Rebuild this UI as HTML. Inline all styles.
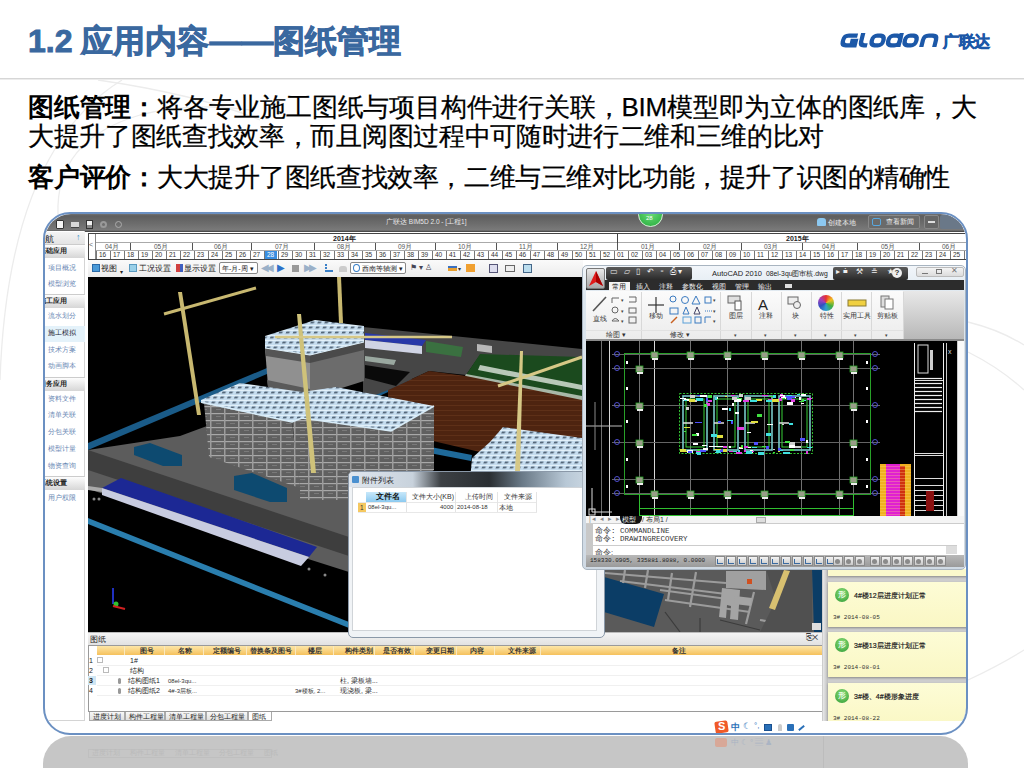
<!DOCTYPE html>
<html><head><meta charset="utf-8">
<style>
*{margin:0;padding:0;box-sizing:border-box}
html,body{width:1024px;height:768px;overflow:hidden;background:#fff;font-family:"Liberation Sans",sans-serif}
.a{position:absolute}
.t{position:absolute;white-space:nowrap}
b{-webkit-text-stroke:0}
#clip{position:absolute;left:0;top:0;width:1024px;height:768px;clip-path:inset(214px 58px 35px 45px round 26px)}
</style></head><body>
<!-- background swooshes -->
<svg class="a" style="left:0;top:0" width="1024" height="768">
<g stroke="#ececec" stroke-width="1.3" fill="none">
<path d="M0,380 Q8,150 122,80"/>
<path d="M58,215 Q55,140 140,115 Q190,102 250,110"/>
<path d="M98,80 Q200,95 260,120"/>
<path d="M968,322 Q1000,330 1024,345"/>
<path d="M968,352 Q1000,368 1024,390"/>
<path d="M968,680 Q1000,665 1024,650"/>
</g>
</svg>
<!-- header -->
<div class="t" style="left:28px;top:20px;font-size:32px;font-weight:bold;color:#3a689f;letter-spacing:0px;-webkit-text-stroke:0.9px #3a689f">1.2 应用内容——图纸管理</div>
<svg class="a" style="left:840px;top:33px;overflow:visible" width="160" height="18">
 <g transform="translate(3,1) skewX(-14)" stroke="#1c58a8" stroke-width="4.3" fill="none">
  <path d="M15,1.7 H6 Q1.7,1.7 1.7,6 V7.5 Q1.7,11.3 6,11.3 H14.5 V7 H9"/>
  <path d="M20,-1 V7.5 Q20,11.3 24,11.3 H27"/>
  <rect x="30.5" y="1.7" width="11.5" height="9.6" rx="4"/>
  <rect x="47" y="1.7" width="11.5" height="9.6" rx="4"/>
  <path d="M58.5,-1 V13"/>
  <rect x="63.5" y="1.7" width="11.5" height="9.6" rx="4"/>
  <path d="M81.5,13 V6 Q81.5,1.7 86,1.7 H90 Q94.5,1.7 94.5,6 V13"/>
 </g>
</svg>
<div class="t" style="left:943px;top:32px;font-size:16px;font-weight:bold;color:#1c58a8;letter-spacing:-0.5px;-webkit-text-stroke:0.6px #1c58a8">广联达</div>
<div class="a" style="left:0;top:78px;width:1024px;height:1px;background:#d6d6d6"></div><div class="a" style="left:0;top:79px;width:1024px;height:1px;background:#ececec"></div>
<!-- body text -->
<div class="t" style="left:28px;top:93px;font-size:26px;line-height:29px;color:#000;letter-spacing:-0.2px;-webkit-text-stroke:0.25px #000"><b>图纸管理：</b>将各专业施工图纸与项目构件进行关联，BIM模型即为立体的图纸库，大<br><span style="letter-spacing:-0.32px">大提升了图纸查找效率，而且阅图过程中可随时进行二维和三维的比对</span></div>
<div class="t" style="left:28px;top:163px;font-size:26px;line-height:29px;color:#000;letter-spacing:-0.2px;-webkit-text-stroke:0.25px #000"><b>客户评价：</b><span style="letter-spacing:-0.42px">大大提升了图纸查找效率，二维与三维对比功能，提升了识图的精确性</span></div>

<!-- reflection -->
<div class="a" style="left:43px;top:736px;width:925px;height:40px;border-radius:28px 28px 0 0;background:#c6c6c6"></div>
<div class="a" style="left:88px;top:749px;width:184px;height:9px;border:1px solid #bfbfbf"></div>
<div class="t" style="left:92px;top:749px;font-size:6.5px;color:#bababa;word-spacing:8px">进度计划 构件工程量 清单工程量 分包工程量 图纸</div>
<div class="a" style="left:823px;top:736px;width:1px;height:32px;background:#bcbcbc"></div>
<div class="a" style="left:715px;top:738px;width:12px;height:9px;background:#d8a898;border-radius:2px"></div>
<div class="t" style="left:731px;top:737px;font-size:8px;color:#aab4c4;letter-spacing:2px">中☾°▤♟</div>

<div id="clip">
  <!-- app background -->
  <div class="a" style="left:44px;top:213px;width:923px;height:521px;background:#fff"></div>
  <!-- title bar -->
  <div class="a" style="left:44px;top:213px;width:923px;height:19px;background:linear-gradient(#7c7c7c,#5e5e5e 15%,#6e6e6e 60%,#7a7a7a 90%,#3a3a3a)"></div>

  <div class="a" style="left:56px;top:220px;width:8px;height:9px;background:#f4f4f4;border:1px solid #333;border-radius:1px"></div>
  <div class="a" style="left:71px;top:222px;width:8px;height:6px;background:#d8d8d8;border-bottom:1px solid #444"></div>
  <div class="a" style="left:86px;top:220px;width:7px;height:9px;background:linear-gradient(#f0f0f0 50%,#888 50%);border:1px solid #333"></div>
  <div class="a" style="left:100px;top:221px;width:7px;height:7px;border:2px solid #999;border-radius:50%"></div>
  <div class="a" style="left:115px;top:221px;width:7px;height:7px;border:1.5px solid #aaa;border-radius:50%"></div>
  <div class="t" style="left:386px;top:218px;font-size:6.5px;color:#e8e8e8">广联达 BIM5D 2.0 - [工程1]</div>
  <div class="a" style="left:638px;top:202px;width:25px;height:25px;border-radius:50%;background:radial-gradient(circle at 50% 40%,#6fe07a,#22a83a);border:1px solid #d8f0d8"></div>
  <div class="t" style="left:646px;top:215px;font-size:6px;color:#fff">28</div>
  <div class="a" style="left:817px;top:218px;width:9px;height:8px;background:#8cc8f0;border-radius:3px 3px 1px 1px"></div>
  <div class="t" style="left:828px;top:218px;font-size:7px;color:#eee">创建本地</div>
  <div class="a" style="left:868px;top:215px;width:52px;height:14px;background:#6a6a6a;border:1px solid #888;border-radius:2px"></div>
  <div class="a" style="left:872px;top:218px;width:9px;height:8px;border:1.5px solid #58a8e0;border-radius:2px"></div>
  <div class="t" style="left:886px;top:218px;font-size:6.5px;color:#eee">查看新闻</div>
  <div class="a" style="left:924px;top:215px;width:15px;height:14px;background:#666;border:1px solid #888;border-radius:2px"></div>
  <div class="a" style="left:928px;top:221px;width:7px;height:2px;background:#ddd"></div>
  <div class="a" style="left:940px;top:215px;width:24px;height:14px;background:#6a7888;border-radius:2px"></div>

<div class="a" style="left:88px;top:233px;width:880px;height:27px;background:#fff;border:1px solid #444;border-right:none"></div>
<div class="a" style="left:95px;top:234px;width:1px;height:25px;background:#888"></div>
<div class="t" style="left:89px;top:241px;font-size:7px;color:#666">&lt;</div>
<div class="a" style="left:96px;top:242px;width:872px;height:1px;background:#aaa"></div>
<div class="a" style="left:96px;top:250px;width:872px;height:1px;background:#aaa"></div>
<div class="t" style="left:333px;top:234px;font-size:7px;color:#222;font-weight:bold">2014年</div>
<div class="t" style="left:786px;top:234px;font-size:7px;color:#222;font-weight:bold">2015年</div>
<div class="a" style="left:617px;top:234px;width:1px;height:16px;background:#444"></div>
<div class="t" style="left:105px;top:243px;font-size:6.5px;color:#555">04月</div>
<div class="a" style="left:130px;top:243px;width:1px;height:7px;background:#555"></div>
<div class="t" style="left:154px;top:243px;font-size:6.5px;color:#555">05月</div>
<div class="a" style="left:192px;top:243px;width:1px;height:7px;background:#555"></div>
<div class="t" style="left:214px;top:243px;font-size:6.5px;color:#555">06月</div>
<div class="a" style="left:251px;top:243px;width:1px;height:7px;background:#555"></div>
<div class="t" style="left:275px;top:243px;font-size:6.5px;color:#555">07月</div>
<div class="a" style="left:314px;top:243px;width:1px;height:7px;background:#555"></div>
<div class="t" style="left:337px;top:243px;font-size:6.5px;color:#555">08月</div>
<div class="a" style="left:375px;top:243px;width:1px;height:7px;background:#555"></div>
<div class="t" style="left:398px;top:243px;font-size:6.5px;color:#555">09月</div>
<div class="a" style="left:435px;top:243px;width:1px;height:7px;background:#555"></div>
<div class="t" style="left:458px;top:243px;font-size:6.5px;color:#555">10月</div>
<div class="a" style="left:496px;top:243px;width:1px;height:7px;background:#555"></div>
<div class="t" style="left:519px;top:243px;font-size:6.5px;color:#555">11月</div>
<div class="a" style="left:557px;top:243px;width:1px;height:7px;background:#555"></div>
<div class="t" style="left:580px;top:243px;font-size:6.5px;color:#555">12月</div>
<div class="a" style="left:617px;top:243px;width:1px;height:7px;background:#555"></div>
<div class="t" style="left:641px;top:243px;font-size:6.5px;color:#555">01月</div>
<div class="a" style="left:679px;top:243px;width:1px;height:7px;background:#555"></div>
<div class="t" style="left:703px;top:243px;font-size:6.5px;color:#555">02月</div>
<div class="a" style="left:741px;top:243px;width:1px;height:7px;background:#555"></div>
<div class="t" style="left:764px;top:243px;font-size:6.5px;color:#555">03月</div>
<div class="a" style="left:802px;top:243px;width:1px;height:7px;background:#555"></div>
<div class="t" style="left:822px;top:243px;font-size:6.5px;color:#555">04月</div>
<div class="a" style="left:857px;top:243px;width:1px;height:7px;background:#555"></div>
<div class="t" style="left:881px;top:243px;font-size:6.5px;color:#555">05月</div>
<div class="a" style="left:919px;top:243px;width:1px;height:7px;background:#555"></div>
<div class="t" style="left:942px;top:243px;font-size:6.5px;color:#555">06月</div>
<div class="a" style="left:96px;top:251px;width:13px;height:8px;background:#fff;border-left:1px solid #777"></div>
<div class="t" style="left:99px;top:251px;font-size:6.5px;line-height:8px;color:#333">16</div>
<div class="a" style="left:110px;top:251px;width:13px;height:8px;background:#fff;border-left:1px solid #777"></div>
<div class="t" style="left:113px;top:251px;font-size:6.5px;line-height:8px;color:#333">17</div>
<div class="a" style="left:124px;top:251px;width:13px;height:8px;background:#fff;border-left:1px solid #777"></div>
<div class="t" style="left:127px;top:251px;font-size:6.5px;line-height:8px;color:#333">18</div>
<div class="a" style="left:138px;top:251px;width:13px;height:8px;background:#fff;border-left:1px solid #777"></div>
<div class="t" style="left:141px;top:251px;font-size:6.5px;line-height:8px;color:#333">19</div>
<div class="a" style="left:152px;top:251px;width:13px;height:8px;background:#fff;border-left:1px solid #777"></div>
<div class="t" style="left:155px;top:251px;font-size:6.5px;line-height:8px;color:#333">20</div>
<div class="a" style="left:166px;top:251px;width:13px;height:8px;background:#fff;border-left:1px solid #777"></div>
<div class="t" style="left:169px;top:251px;font-size:6.5px;line-height:8px;color:#333">21</div>
<div class="a" style="left:180px;top:251px;width:13px;height:8px;background:#fff;border-left:1px solid #777"></div>
<div class="t" style="left:183px;top:251px;font-size:6.5px;line-height:8px;color:#333">22</div>
<div class="a" style="left:194px;top:251px;width:13px;height:8px;background:#fff;border-left:1px solid #777"></div>
<div class="t" style="left:197px;top:251px;font-size:6.5px;line-height:8px;color:#333">23</div>
<div class="a" style="left:208px;top:251px;width:13px;height:8px;background:#fff;border-left:1px solid #777"></div>
<div class="t" style="left:211px;top:251px;font-size:6.5px;line-height:8px;color:#333">24</div>
<div class="a" style="left:222px;top:251px;width:13px;height:8px;background:#fff;border-left:1px solid #777"></div>
<div class="t" style="left:225px;top:251px;font-size:6.5px;line-height:8px;color:#333">25</div>
<div class="a" style="left:236px;top:251px;width:13px;height:8px;background:#fff;border-left:1px solid #777"></div>
<div class="t" style="left:239px;top:251px;font-size:6.5px;line-height:8px;color:#333">26</div>
<div class="a" style="left:250px;top:251px;width:13px;height:8px;background:#fff;border-left:1px solid #777"></div>
<div class="t" style="left:253px;top:251px;font-size:6.5px;line-height:8px;color:#333">27</div>
<div class="a" style="left:264px;top:251px;width:13px;height:8px;background:#3a8ee0;border-left:1px solid #777"></div>
<div class="t" style="left:267px;top:251px;font-size:6.5px;line-height:8px;color:#fff">28</div>
<div class="a" style="left:278px;top:251px;width:13px;height:8px;background:#fff;border-left:1px solid #777"></div>
<div class="t" style="left:281px;top:251px;font-size:6.5px;line-height:8px;color:#333">29</div>
<div class="a" style="left:292px;top:251px;width:13px;height:8px;background:#fff;border-left:1px solid #777"></div>
<div class="t" style="left:295px;top:251px;font-size:6.5px;line-height:8px;color:#333">30</div>
<div class="a" style="left:306px;top:251px;width:13px;height:8px;background:#fff;border-left:1px solid #777"></div>
<div class="t" style="left:309px;top:251px;font-size:6.5px;line-height:8px;color:#333">31</div>
<div class="a" style="left:320px;top:251px;width:13px;height:8px;background:#fff;border-left:1px solid #777"></div>
<div class="t" style="left:323px;top:251px;font-size:6.5px;line-height:8px;color:#333">32</div>
<div class="a" style="left:334px;top:251px;width:13px;height:8px;background:#fff;border-left:1px solid #777"></div>
<div class="t" style="left:337px;top:251px;font-size:6.5px;line-height:8px;color:#333">33</div>
<div class="a" style="left:348px;top:251px;width:13px;height:8px;background:#fff;border-left:1px solid #777"></div>
<div class="t" style="left:351px;top:251px;font-size:6.5px;line-height:8px;color:#333">34</div>
<div class="a" style="left:362px;top:251px;width:13px;height:8px;background:#fff;border-left:1px solid #777"></div>
<div class="t" style="left:365px;top:251px;font-size:6.5px;line-height:8px;color:#333">35</div>
<div class="a" style="left:376px;top:251px;width:13px;height:8px;background:#fff;border-left:1px solid #777"></div>
<div class="t" style="left:379px;top:251px;font-size:6.5px;line-height:8px;color:#333">36</div>
<div class="a" style="left:390px;top:251px;width:13px;height:8px;background:#fff;border-left:1px solid #777"></div>
<div class="t" style="left:393px;top:251px;font-size:6.5px;line-height:8px;color:#333">37</div>
<div class="a" style="left:404px;top:251px;width:13px;height:8px;background:#fff;border-left:1px solid #777"></div>
<div class="t" style="left:407px;top:251px;font-size:6.5px;line-height:8px;color:#333">38</div>
<div class="a" style="left:418px;top:251px;width:13px;height:8px;background:#fff;border-left:1px solid #777"></div>
<div class="t" style="left:421px;top:251px;font-size:6.5px;line-height:8px;color:#333">39</div>
<div class="a" style="left:432px;top:251px;width:13px;height:8px;background:#fff;border-left:1px solid #777"></div>
<div class="t" style="left:435px;top:251px;font-size:6.5px;line-height:8px;color:#333">40</div>
<div class="a" style="left:446px;top:251px;width:13px;height:8px;background:#fff;border-left:1px solid #777"></div>
<div class="t" style="left:449px;top:251px;font-size:6.5px;line-height:8px;color:#333">41</div>
<div class="a" style="left:460px;top:251px;width:13px;height:8px;background:#fff;border-left:1px solid #777"></div>
<div class="t" style="left:463px;top:251px;font-size:6.5px;line-height:8px;color:#333">42</div>
<div class="a" style="left:474px;top:251px;width:13px;height:8px;background:#fff;border-left:1px solid #777"></div>
<div class="t" style="left:477px;top:251px;font-size:6.5px;line-height:8px;color:#333">43</div>
<div class="a" style="left:488px;top:251px;width:13px;height:8px;background:#fff;border-left:1px solid #777"></div>
<div class="t" style="left:491px;top:251px;font-size:6.5px;line-height:8px;color:#333">44</div>
<div class="a" style="left:502px;top:251px;width:13px;height:8px;background:#fff;border-left:1px solid #777"></div>
<div class="t" style="left:505px;top:251px;font-size:6.5px;line-height:8px;color:#333">45</div>
<div class="a" style="left:516px;top:251px;width:13px;height:8px;background:#fff;border-left:1px solid #777"></div>
<div class="t" style="left:519px;top:251px;font-size:6.5px;line-height:8px;color:#333">46</div>
<div class="a" style="left:530px;top:251px;width:13px;height:8px;background:#fff;border-left:1px solid #777"></div>
<div class="t" style="left:533px;top:251px;font-size:6.5px;line-height:8px;color:#333">47</div>
<div class="a" style="left:544px;top:251px;width:13px;height:8px;background:#fff;border-left:1px solid #777"></div>
<div class="t" style="left:547px;top:251px;font-size:6.5px;line-height:8px;color:#333">48</div>
<div class="a" style="left:558px;top:251px;width:13px;height:8px;background:#fff;border-left:1px solid #777"></div>
<div class="t" style="left:561px;top:251px;font-size:6.5px;line-height:8px;color:#333">49</div>
<div class="a" style="left:572px;top:251px;width:13px;height:8px;background:#fff;border-left:1px solid #777"></div>
<div class="t" style="left:575px;top:251px;font-size:6.5px;line-height:8px;color:#333">50</div>
<div class="a" style="left:586px;top:251px;width:13px;height:8px;background:#fff;border-left:1px solid #777"></div>
<div class="t" style="left:589px;top:251px;font-size:6.5px;line-height:8px;color:#333">51</div>
<div class="a" style="left:600px;top:251px;width:13px;height:8px;background:#fff;border-left:1px solid #777"></div>
<div class="t" style="left:603px;top:251px;font-size:6.5px;line-height:8px;color:#333">52</div>
<div class="a" style="left:614px;top:251px;width:13px;height:8px;background:#fff;border-left:1px solid #777"></div>
<div class="t" style="left:617px;top:251px;font-size:6.5px;line-height:8px;color:#333">01</div>
<div class="a" style="left:628px;top:251px;width:13px;height:8px;background:#fff;border-left:1px solid #777"></div>
<div class="t" style="left:631px;top:251px;font-size:6.5px;line-height:8px;color:#333">02</div>
<div class="a" style="left:642px;top:251px;width:13px;height:8px;background:#fff;border-left:1px solid #777"></div>
<div class="t" style="left:645px;top:251px;font-size:6.5px;line-height:8px;color:#333">03</div>
<div class="a" style="left:656px;top:251px;width:13px;height:8px;background:#fff;border-left:1px solid #777"></div>
<div class="t" style="left:659px;top:251px;font-size:6.5px;line-height:8px;color:#333">04</div>
<div class="a" style="left:670px;top:251px;width:13px;height:8px;background:#fff;border-left:1px solid #777"></div>
<div class="t" style="left:673px;top:251px;font-size:6.5px;line-height:8px;color:#333">05</div>
<div class="a" style="left:684px;top:251px;width:13px;height:8px;background:#fff;border-left:1px solid #777"></div>
<div class="t" style="left:687px;top:251px;font-size:6.5px;line-height:8px;color:#333">06</div>
<div class="a" style="left:698px;top:251px;width:13px;height:8px;background:#fff;border-left:1px solid #777"></div>
<div class="t" style="left:701px;top:251px;font-size:6.5px;line-height:8px;color:#333">07</div>
<div class="a" style="left:712px;top:251px;width:13px;height:8px;background:#fff;border-left:1px solid #777"></div>
<div class="t" style="left:715px;top:251px;font-size:6.5px;line-height:8px;color:#333">08</div>
<div class="a" style="left:726px;top:251px;width:13px;height:8px;background:#fff;border-left:1px solid #777"></div>
<div class="t" style="left:729px;top:251px;font-size:6.5px;line-height:8px;color:#333">09</div>
<div class="a" style="left:740px;top:251px;width:13px;height:8px;background:#fff;border-left:1px solid #777"></div>
<div class="t" style="left:743px;top:251px;font-size:6.5px;line-height:8px;color:#333">10</div>
<div class="a" style="left:754px;top:251px;width:13px;height:8px;background:#fff;border-left:1px solid #777"></div>
<div class="t" style="left:757px;top:251px;font-size:6.5px;line-height:8px;color:#333">11</div>
<div class="a" style="left:768px;top:251px;width:13px;height:8px;background:#fff;border-left:1px solid #777"></div>
<div class="t" style="left:771px;top:251px;font-size:6.5px;line-height:8px;color:#333">12</div>
<div class="a" style="left:782px;top:251px;width:13px;height:8px;background:#fff;border-left:1px solid #777"></div>
<div class="t" style="left:785px;top:251px;font-size:6.5px;line-height:8px;color:#333">13</div>
<div class="a" style="left:796px;top:251px;width:13px;height:8px;background:#fff;border-left:1px solid #777"></div>
<div class="t" style="left:799px;top:251px;font-size:6.5px;line-height:8px;color:#333">14</div>
<div class="a" style="left:810px;top:251px;width:13px;height:8px;background:#fff;border-left:1px solid #777"></div>
<div class="t" style="left:813px;top:251px;font-size:6.5px;line-height:8px;color:#333">15</div>
<div class="a" style="left:824px;top:251px;width:13px;height:8px;background:#fff;border-left:1px solid #777"></div>
<div class="t" style="left:827px;top:251px;font-size:6.5px;line-height:8px;color:#333">16</div>
<div class="a" style="left:838px;top:251px;width:13px;height:8px;background:#fff;border-left:1px solid #777"></div>
<div class="t" style="left:841px;top:251px;font-size:6.5px;line-height:8px;color:#333">17</div>
<div class="a" style="left:852px;top:251px;width:13px;height:8px;background:#fff;border-left:1px solid #777"></div>
<div class="t" style="left:855px;top:251px;font-size:6.5px;line-height:8px;color:#333">18</div>
<div class="a" style="left:866px;top:251px;width:13px;height:8px;background:#fff;border-left:1px solid #777"></div>
<div class="t" style="left:869px;top:251px;font-size:6.5px;line-height:8px;color:#333">19</div>
<div class="a" style="left:880px;top:251px;width:13px;height:8px;background:#fff;border-left:1px solid #777"></div>
<div class="t" style="left:883px;top:251px;font-size:6.5px;line-height:8px;color:#333">20</div>
<div class="a" style="left:894px;top:251px;width:13px;height:8px;background:#fff;border-left:1px solid #777"></div>
<div class="t" style="left:897px;top:251px;font-size:6.5px;line-height:8px;color:#333">21</div>
<div class="a" style="left:908px;top:251px;width:13px;height:8px;background:#fff;border-left:1px solid #777"></div>
<div class="t" style="left:911px;top:251px;font-size:6.5px;line-height:8px;color:#333">22</div>
<div class="a" style="left:922px;top:251px;width:13px;height:8px;background:#fff;border-left:1px solid #777"></div>
<div class="t" style="left:925px;top:251px;font-size:6.5px;line-height:8px;color:#333">23</div>
<div class="a" style="left:936px;top:251px;width:13px;height:8px;background:#fff;border-left:1px solid #777"></div>
<div class="t" style="left:939px;top:251px;font-size:6.5px;line-height:8px;color:#333">24</div>
<div class="a" style="left:950px;top:251px;width:13px;height:8px;background:#fff;border-left:1px solid #777"></div>
<div class="t" style="left:953px;top:251px;font-size:6.5px;line-height:8px;color:#333">25</div>
<div class="a" style="left:964px;top:251px;width:13px;height:8px;background:#fff;border-left:1px solid #777"></div>
<div class="t" style="left:967px;top:251px;font-size:6.5px;line-height:8px;color:#333">26</div>
<div class="a" style="left:44px;top:231px;width:41px;height:490px;background:#fff;border-right:1px solid #d4d4d4;border-bottom:1px solid #d4d4d4"></div>
<div class="a" style="left:44px;top:232px;width:41px;height:12px;background:linear-gradient(#f4f4f4,#e4e4e4)"></div>
<div class="t" style="left:36px;top:233px;font-size:9px;color:#222">导航</div>
<div class="t" style="left:76px;top:232px;font-size:9px;color:#3a90c8;font-weight:bold">↑</div>
<div class="a" style="left:44px;top:244px;width:41px;height:14px;background:linear-gradient(#fdfdfd,#d6d6d6);border-top:1px solid #ccc"></div>
<div class="t" style="left:39px;top:246px;font-size:7px;color:#222;font-weight:bold">基础应用</div>
<div class="t" style="left:48px;top:264px;font-size:6.5px;color:#6a88b4">项目概况</div>
<div class="t" style="left:48px;top:280px;font-size:6.5px;color:#6a88b4">模型浏览</div>
<div class="a" style="left:44px;top:294px;width:41px;height:14px;background:linear-gradient(#fdfdfd,#d6d6d6);border-top:1px solid #ccc"></div>
<div class="t" style="left:39px;top:296px;font-size:7px;color:#222;font-weight:bold">施工应用</div>
<div class="t" style="left:48px;top:312px;font-size:6.5px;color:#6a88b4">流水划分</div>
<div class="a" style="left:45px;top:326px;width:40px;height:16px;background:#e4f2fa"></div>
<div class="t" style="left:48px;top:329px;font-size:6.5px;color:#223">施工模拟</div>
<div class="t" style="left:48px;top:346px;font-size:6.5px;color:#6a88b4">技术方案</div>
<div class="t" style="left:48px;top:362px;font-size:6.5px;color:#6a88b4">动画脚本</div>
<div class="a" style="left:44px;top:377px;width:41px;height:14px;background:linear-gradient(#fdfdfd,#d6d6d6);border-top:1px solid #ccc"></div>
<div class="t" style="left:39px;top:379px;font-size:7px;color:#222;font-weight:bold">商务应用</div>
<div class="t" style="left:48px;top:395px;font-size:6.5px;color:#6a88b4">资料文件</div>
<div class="t" style="left:48px;top:411px;font-size:6.5px;color:#6a88b4">清单关联</div>
<div class="t" style="left:48px;top:428px;font-size:6.5px;color:#6a88b4">分包关联</div>
<div class="t" style="left:48px;top:445px;font-size:6.5px;color:#6a88b4">模型计量</div>
<div class="t" style="left:48px;top:462px;font-size:6.5px;color:#6a88b4">物资查询</div>
<div class="a" style="left:44px;top:476px;width:41px;height:14px;background:linear-gradient(#fdfdfd,#d6d6d6);border-top:1px solid #ccc"></div>
<div class="t" style="left:39px;top:478px;font-size:7px;color:#222;font-weight:bold">系统设置</div>
<div class="t" style="left:48px;top:494px;font-size:6.5px;color:#6a88b4">用户权限</div>

  <!-- toolbar -->
  <div class="a" style="left:88px;top:260px;width:495px;height:17px;background:linear-gradient(#fafafa,#ececec)"></div>
  <div class="a" style="left:92px;top:264px;width:8px;height:8px;background:#4a9ad8;border:1px solid #2a6aa8"></div>
  <div class="t" style="left:101px;top:264px;font-size:7.5px;color:#222">视图</div>
  <div class="t" style="left:120px;top:268px;font-size:6px;color:#222">▾</div>
  <div class="a" style="left:129px;top:264px;width:8px;height:8px;background:#9ad0e8;border:1px solid #5a9ac0"></div>
  <div class="t" style="left:139px;top:264px;font-size:7.5px;color:#222">工况设置</div>
  <div class="a" style="left:176px;top:264px;width:7px;height:8px;background:linear-gradient(90deg,#d04040 50%,#4060c0 50%)"></div>
  <div class="t" style="left:184px;top:264px;font-size:7.5px;color:#222">显示设置</div>
  <div class="a" style="left:219px;top:262px;width:39px;height:12px;background:#fff;border:1px solid #888;border-radius:2px"></div>
  <div class="t" style="left:222px;top:264px;font-size:7px;color:#222">年-月-周 ▾</div>
  <div class="t" style="left:261px;top:262px;font-size:10px;color:#9ab0c8;letter-spacing:-3px">◀◀</div>
  <div class="t" style="left:277px;top:262px;font-size:10px;color:#2a70c8">▶</div>
  <div class="a" style="left:292px;top:265px;width:7px;height:7px;background:#999"></div>
  <div class="t" style="left:304px;top:262px;font-size:10px;color:#9ab0c8;letter-spacing:-3px">▶▶</div>
  <div class="a" style="left:325px;top:264px;width:8px;height:8px;border-left:2px dotted #3a80c8;border-bottom:2px solid #3a80c8"></div>
  <div class="a" style="left:339px;top:266px;width:8px;height:6px;background:#ccc;border-radius:3px 3px 0 0"></div>
  <div class="a" style="left:350px;top:262px;width:56px;height:12px;background:#fff;border:1px solid #888;border-radius:2px"></div>
  <div class="a" style="left:353px;top:264px;width:7px;height:8px;border-radius:50%;border:1.5px solid #3a80c8"></div>
  <div class="t" style="left:362px;top:264px;font-size:7px;color:#222">西南等轴测 ▾</div>
  <div class="t" style="left:410px;top:263px;font-size:8px;color:#445">⚑ ▾ ♙</div>
  <div class="a" style="left:448px;top:266px;width:9px;height:5px;background:#e8a030;border-top:2px solid #3a70c0"></div>
  <div class="t" style="left:458px;top:265px;font-size:6px;color:#333">▾</div>
  <div class="a" style="left:466px;top:264px;width:9px;height:8px;background:#f0a030"></div>
  <div class="a" style="left:489px;top:264px;width:9px;height:9px;background:#dde;border:1px solid #557"></div>
  <div class="a" style="left:505px;top:265px;width:10px;height:7px;background:#eee;border:1px solid #666"></div>
  <div class="a" style="left:523px;top:264px;width:9px;height:9px;background:#bde;border:1px solid #468"></div>

  <!-- viewport -->
  <div class="a" style="left:88px;top:277px;width:736px;height:355px;background:#000"></div>

  <!-- 3D scene -->
  <svg class="a" style="left:0;top:0" width="1024" height="768">
   <defs>
    <pattern id="roof" width="7" height="5" patternUnits="userSpaceOnUse" patternTransform="skewX(-20)">
      <rect width="7" height="5" fill="#c6ddef"/><rect x="1" y="1.5" width="3.5" height="2" fill="#56687a"/><rect x="0" y="0" width="7" height="0.8" fill="#e8f4fc"/>
    </pattern>
    <pattern id="wall" width="14" height="7" patternUnits="userSpaceOnUse">
      <rect width="14" height="7" fill="#606060"/><rect x="0" y="0" width="14" height="1.2" fill="#a8a8a8"/><rect x="0" y="0" width="1.5" height="7" fill="#9c9c9c"/><rect x="6" y="3" width="5" height="1" fill="#7a7a7a"/>
    </pattern>
    <pattern id="brown" width="5" height="5" patternUnits="userSpaceOnUse">
      <rect width="5" height="5" fill="#4e2410"/><rect width="5" height="1" fill="#5e3018"/>
    </pattern>
   </defs>
   <!-- ground left -->
   <polygon points="88,450 180,436 207,426 300,440 349,470 349,572 88,489" fill="#5c5c5c"/>
   <polygon points="88,450 349,537 349,556 88,470" fill="#3e3e3e"/>
   <polygon points="134,447 150,443 182,455 182,466 163,466 134,455" fill="#0d4a70"/>
   <polygon points="234,476 252,473 287,488 287,502 270,502 234,490" fill="#0d4a70"/>
   <circle cx="94" cy="499" r="1.5" fill="#888"/><circle cx="99" cy="499" r="1.5" fill="#888"/>
   <circle cx="309" cy="569" r="1.5" fill="#888"/><circle cx="325" cy="575" r="1.5" fill="#888"/>
   <!-- blue stripe upper -->
   <polygon points="88,443 267,368 267,374 88,450" fill="#1a5b88"/>
   <polygon points="362,398 412,375 412,381 362,404" fill="#1a5b88"/>
   <!-- teal stripe lower -->
   <polygon points="88,518 349,622 349,628 88,524" fill="#2a7eae"/>
   <!-- long blue roof -->
   <polygon points="121,478 317,547 309,557 102,488" fill="#1c2894"/>
   <polygon points="102,488 309,557 301,566 102,495" fill="#c8cce0"/>
   <polygon points="88,486 102,488 102,492 88,490" fill="#aaa"/>
   <!-- platform back -->
   <polygon points="363,327 582,349 582,358 480,355 466,375 429,371 388,390 363,400" fill="#464646"/>
   <polygon points="365,333 426,340 422,346 365,340" fill="#2838a8"/>
   <polygon points="365,340 422,346 422,354 365,348" fill="#d0d4e4"/>
   <polygon points="426,341 463,347 461,357 426,352" fill="#3a7040"/>
   <polygon points="477,344 492,346 492,353 477,351" fill="#b8b8b8"/>
   <polygon points="365,356 396,360 394,365 365,361" fill="#9aa8a0"/>
   <polygon points="365,365 410,372 396,386 365,378" fill="#0a0a0a"/>
   <!-- green field -->
   <polygon points="480,354 582,357 582,399 466,375" fill="#1b4a1e"/>
   <polygon points="480,365 582,385 582,390 478,370" fill="#b8c8b8"/>
   <polygon points="466,374 582,396 582,401 464,378" fill="#a8b8a8"/>
   <!-- brown field -->
   <polygon points="388,390 429,371 466,376 582,400 582,441 480,452 433,441 388,420" fill="url(#brown)"/>
   <polygon points="415,444 472,455 471,461 414,450" fill="#1f6a9a"/>
   <!-- roof bottom right -->
   <polygon points="472,458 490,442 503,427 582,438 582,480 470,480" fill="url(#roof)"/>
   <!-- tall back building -->
   <polygon points="265,348 310,355 310,398 268,386" fill="#909090"/>
   <polygon points="310,355 364,342 364,381 310,398" fill="#6c6c6c"/>
   <polygon points="265,348 310,355 310,363 266,356" fill="#555"/>
   <polygon points="310,355 364,342 364,350 310,363" fill="#4a4a4a"/>
   <polygon points="267,380 310,389 310,398 268,388" fill="#5a5a5a"/>
   <polygon points="265,336 315,320 364,326 364,342 310,355 265,348" fill="url(#roof)"/>
   <polyline points="265,348 310,355 364,342" fill="none" stroke="#dff0fa" stroke-width="1.2"/>
   <!-- front building walls -->
   <polygon points="204,403 292,422 300,488 209,457" fill="url(#wall)"/>
   <polygon points="292,422 338,405 434,406 434,470 391,500 300,500 300,488" fill="url(#wall)"/>
   <!-- front roof -->
   <polygon points="201,400 240,383 302,392 336,387 434,406 391,431 302,418 292,422 201,403" fill="url(#roof)"/>
   <polyline points="201,402 292,422 302,418 391,431 434,406" fill="none" stroke="#d8ecf8" stroke-width="1.5"/>
   <!-- cranes -->
   <polygon points="178,292 182,292 201,415 197,415" fill="#c8b870"/>
   <line x1="164" y1="314" x2="256" y2="288" stroke="#c8b870" stroke-width="3"/>
   <polygon points="297,314 301,314 316,473 311,473" fill="#cfc27a"/>
   <line x1="275" y1="337" x2="452" y2="337" stroke="#d6c886" stroke-width="2.5"/>
   <polygon points="337,277 341,277 343,323 339,323" fill="#c8b870"/>
   <polygon points="520,351 523,351 520,472 515,472" fill="#d6c886"/>
   <line x1="498" y1="386" x2="582" y2="357" stroke="#d6c886" stroke-width="3"/>
   <!-- axis -->
   <line x1="113" y1="588" x2="113" y2="604" stroke="#2030c0" stroke-width="2"/>
   <circle cx="116" cy="604" r="2.5" fill="#30c030"/>
   <line x1="113" y1="606" x2="125" y2="609" stroke="#d02020" stroke-width="2"/>
   <!-- strip below cad -->
   <rect x="604" y="569" width="220" height="63" fill="#5a5a5a"/>
   <polygon points="604,577 664,594 654,627 604,612" fill="#0b3d66"/>
   <g stroke="#9c9c9c" stroke-width="2.2">
    <line x1="605" y1="573" x2="726" y2="583"/><line x1="620" y1="581" x2="726" y2="594"/><line x1="660" y1="590" x2="750" y2="602"/><line x1="665" y1="600" x2="750" y2="612"/>
    <line x1="625" y1="570" x2="623" y2="583"/><line x1="648" y1="570" x2="645" y2="588"/><line x1="672" y1="573" x2="668" y2="600"/><line x1="696" y1="572" x2="690" y2="607"/><line x1="754" y1="592" x2="746" y2="624"/>
    <line x1="780" y1="598" x2="810" y2="606"/><line x1="760" y1="620" x2="772" y2="622"/>
   </g>
   <g stroke="#3c3c3c" stroke-width="1.2" fill="none"><path d="M665,612 L680,632"/><path d="M700,618 V632"/><path d="M720,620 L760,630"/></g>
   <polygon points="726,571 766,571 766,590 726,588" fill="#a0a0a0"/>
   <polygon points="722,588 740,590 738,620 730,619 731,606 727,605 726,618 719,617" fill="#a4a4a4"/>
   <polygon points="735,596 752,598 751,606 734,604" fill="#a4a4a4"/>
   <rect x="747" y="579" width="5" height="5" fill="#d05020"/>
   <polygon points="766,569 812,569 812,632 760,632 776,600" fill="#505050"/>
   <polygon points="784,570 790,571 775,610 769,608" fill="#d8c070"/>
   <polygon points="812,569 822,569 822,632 814,632" fill="#0b3d66"/>
   <rect x="812" y="623" width="9" height="7" fill="#ddd"/>
  </svg>
  <!-- bottom panel -->
  <div class="a" style="left:88px;top:632px;width:736px;height:13px;background:linear-gradient(#f4f4f4,#e2e2e2);border-top:1px solid #bbb"></div>
  <div class="t" style="left:90px;top:634px;font-size:8px;color:#222">图纸</div>
  <div class="t" style="left:806px;top:633px;font-size:8px;color:#333">⎘✕</div>
  <div class="a" style="left:88px;top:645px;width:735px;height:67px;background:#fff;border:1px solid #9a9a9a"></div>
  <div class="a" style="left:97px;top:646px;width:725px;height:9px;background:linear-gradient(#fde6a8,#f5c15c)"></div>
  <div class="t" style="left:140px;top:646px;font-size:6.5px;line-height:9px;color:#333;font-weight:bold">图号</div>
  <div class="t" style="left:178px;top:646px;font-size:6.5px;line-height:9px;color:#333;font-weight:bold">名称</div>
  <div class="t" style="left:213px;top:646px;font-size:6.5px;line-height:9px;color:#333;font-weight:bold">定额编号</div>
  <div class="t" style="left:250px;top:646px;font-size:6.5px;line-height:9px;color:#333;font-weight:bold">替换条及图号</div>
  <div class="t" style="left:308px;top:646px;font-size:6.5px;line-height:9px;color:#333;font-weight:bold">楼层</div>
  <div class="t" style="left:345px;top:646px;font-size:6.5px;line-height:9px;color:#333;font-weight:bold">构件类别</div>
  <div class="t" style="left:383px;top:646px;font-size:6.5px;line-height:9px;color:#333;font-weight:bold">是否有效</div>
  <div class="t" style="left:426px;top:646px;font-size:6.5px;line-height:9px;color:#333;font-weight:bold">变更日期</div>
  <div class="t" style="left:470px;top:646px;font-size:6.5px;line-height:9px;color:#333;font-weight:bold">内容</div>
  <div class="t" style="left:508px;top:646px;font-size:6.5px;line-height:9px;color:#333;font-weight:bold">文件来源</div>
  <div class="t" style="left:672px;top:646px;font-size:6.5px;line-height:9px;color:#333;font-weight:bold">备注</div>
  <div class="a" style="left:124px;top:646px;width:1px;height:9px;background:#f8e8c0"></div>
  <div class="a" style="left:164px;top:646px;width:1px;height:9px;background:#f8e8c0"></div>
  <div class="a" style="left:203px;top:646px;width:1px;height:9px;background:#f8e8c0"></div>
  <div class="a" style="left:246px;top:646px;width:1px;height:9px;background:#f8e8c0"></div>
  <div class="a" style="left:295px;top:646px;width:1px;height:9px;background:#f8e8c0"></div>
  <div class="a" style="left:333px;top:646px;width:1px;height:9px;background:#f8e8c0"></div>
  <div class="a" style="left:374px;top:646px;width:1px;height:9px;background:#f8e8c0"></div>
  <div class="a" style="left:414px;top:646px;width:1px;height:9px;background:#f8e8c0"></div>
  <div class="a" style="left:456px;top:646px;width:1px;height:9px;background:#f8e8c0"></div>
  <div class="a" style="left:494px;top:646px;width:1px;height:9px;background:#f8e8c0"></div>
  <div class="a" style="left:540px;top:646px;width:1px;height:9px;background:#f8e8c0"></div>
  <div class="a" style="left:97px;top:665px;width:725px;height:1px;background:#f0f0f0"></div>
  <div class="a" style="left:97px;top:675px;width:725px;height:1px;background:#f0f0f0"></div>
  <div class="a" style="left:97px;top:685px;width:725px;height:1px;background:#f0f0f0"></div>
  <div class="a" style="left:97px;top:695px;width:725px;height:1px;background:#f0f0f0"></div>
  <div class="t" style="left:89px;top:656px;font-size:7px;line-height:10px;color:#222">1<br>2</div>
  <div class="a" style="left:88px;top:676px;width:8px;height:9px;background:#cfe6f4"></div>
  <div class="t" style="left:89px;top:676px;font-size:7px;line-height:10px;color:#222;font-weight:bold">3</div>
  <div class="t" style="left:89px;top:686px;font-size:7px;line-height:10px;color:#222">4</div>
  <div class="a" style="left:97px;top:657px;width:6px;height:6px;border:1px solid #bbb"></div>
  <div class="a" style="left:103px;top:667px;width:6px;height:6px;border:1px solid #bbb"></div>
  <div class="t" style="left:130px;top:656px;font-size:7px;line-height:10px;color:#222">1#<br>结构</div>
  <div class="a" style="left:118px;top:678px;width:3px;height:6px;background:#999;border-radius:2px"></div>
  <div class="a" style="left:118px;top:688px;width:3px;height:6px;background:#999;border-radius:2px"></div>
  <div class="t" style="left:128px;top:676px;font-size:7px;line-height:10px;color:#222">结构图纸1<br>结构图纸2</div>
  <div class="t" style="left:168px;top:676px;font-size:6px;line-height:10px;color:#333">08el-3qu...<br>4#-3层板...</div>
  <div class="t" style="left:295px;top:686px;font-size:6px;line-height:10px;color:#333">3#楼板, 2...</div>
  <div class="t" style="left:340px;top:676px;font-size:7px;line-height:10px;color:#333">柱, 梁板墙...<br>现浇板, 梁...</div>
  
  <div class="a" style="left:89px;top:712px;width:36px;height:9px;background:linear-gradient(#f8f8f8,#e0e0e0);border:1px solid #aaa;border-top:none"></div>
  <div class="t" style="left:93px;top:712px;font-size:7px;line-height:9px;color:#222">进度计划</div>
  <div class="a" style="left:125px;top:712px;width:40px;height:9px;background:linear-gradient(#f8f8f8,#e0e0e0);border:1px solid #aaa;border-top:none"></div>
  <div class="t" style="left:129px;top:712px;font-size:7px;line-height:9px;color:#222">构件工程量</div>
  <div class="a" style="left:165px;top:712px;width:41px;height:9px;background:linear-gradient(#f8f8f8,#e0e0e0);border:1px solid #aaa;border-top:none"></div>
  <div class="t" style="left:169px;top:712px;font-size:7px;line-height:9px;color:#222">清单工程量</div>
  <div class="a" style="left:206px;top:712px;width:42px;height:9px;background:linear-gradient(#f8f8f8,#e0e0e0);border:1px solid #aaa;border-top:none"></div>
  <div class="t" style="left:210px;top:712px;font-size:7px;line-height:9px;color:#222">分包工程量</div>
  <div class="a" style="left:248px;top:712px;width:24px;height:9px;background:#fff;border:1px solid #aaa;border-top:none"></div>
  <div class="t" style="left:252px;top:712px;font-size:7px;line-height:9px;color:#222">图纸</div>
  <!-- IME bar -->
  <div class="a" style="left:715px;top:721px;width:13px;height:12px;background:#f05a28;border-radius:2px;transform:rotate(-8deg)"></div>
  <div class="t" style="left:718px;top:720px;font-size:11px;line-height:13px;font-weight:bold;color:#fff">S</div>
  <div class="t" style="left:731px;top:722px;font-size:9px;line-height:10px;font-weight:bold;color:#2a70b8">中</div>
  <div class="t" style="left:743px;top:721px;font-size:9px;line-height:10px;color:#2a70b8">☾</div>
  <div class="t" style="left:754px;top:721px;font-size:8px;line-height:10px;color:#2a70b8">°,</div>
  <div class="a" style="left:764px;top:724px;width:8px;height:7px;background:#2a70b8;border:1px solid #1a5090"></div>
  <div class="a" style="left:778px;top:724px;width:4px;height:7px;background:#ccc;border-radius:2px 2px 0 0"></div>
  <div class="a" style="left:787px;top:724px;width:7px;height:7px;background:#2a70b8;border-radius:1px"></div>
  <div class="a" style="left:798px;top:727px;width:7px;height:2px;background:#2a70b8;transform:rotate(-40deg)"></div>
  <!-- right cards panel -->
  <div class="a" style="left:822px;top:569px;width:146px;height:152px;overflow:hidden;background:#cdcdcd">
    <div class="a" style="left:1px;top:0;width:5px;height:152px;background:linear-gradient(90deg,#e8e8e8,#bdbdbd)"></div>
    <div class="a" style="left:6px;top:-5px;width:140px;height:12px;background:#fbf9cc;box-shadow:0 1px 2px #8a8a8a"></div>
    <div class="a" style="left:6px;top:13px;width:140px;height:45px;background:linear-gradient(#fdfcd6,#faf7c4);box-shadow:0 1px 2px #8a8a8a"></div>
    <div class="a" style="left:13px;top:19px;width:14px;height:14px;border-radius:50%;background:radial-gradient(circle at 50% 35%,#90e078,#2c9a34)"></div>
    <div class="t" style="left:16px;top:21px;font-size:8px;line-height:9px;color:#fff">形</div>
    <div class="t" style="left:32px;top:22px;font-size:7px;line-height:9px;color:#222;-webkit-text-stroke:0.2px #222">4#楼12层进度计划正常</div>
    <div class="t" style="left:11px;top:45px;font-size:6px;line-height:8px;color:#333;font-family:'Liberation Mono',monospace">3# 2014-08-05</div>
    <div class="a" style="left:6px;top:63px;width:140px;height:45px;background:linear-gradient(#fdfcd6,#faf7c4);box-shadow:0 1px 2px #8a8a8a"></div>
    <div class="a" style="left:13px;top:69px;width:14px;height:14px;border-radius:50%;background:radial-gradient(circle at 50% 35%,#90e078,#2c9a34)"></div>
    <div class="t" style="left:16px;top:71px;font-size:8px;line-height:9px;color:#fff">形</div>
    <div class="t" style="left:32px;top:72px;font-size:7px;line-height:9px;color:#222;-webkit-text-stroke:0.2px #222">3#楼13层进度计划正常</div>
    <div class="t" style="left:11px;top:95px;font-size:6px;line-height:8px;color:#333;font-family:'Liberation Mono',monospace">3# 2014-08-01</div>
    <div class="a" style="left:6px;top:114px;width:140px;height:45px;background:linear-gradient(#fdfcd6,#faf7c4);box-shadow:0 1px 2px #8a8a8a"></div>
    <div class="a" style="left:13px;top:120px;width:14px;height:14px;border-radius:50%;background:radial-gradient(circle at 50% 35%,#90e078,#2c9a34)"></div>
    <div class="t" style="left:16px;top:122px;font-size:8px;line-height:9px;color:#fff">形</div>
    <div class="t" style="left:32px;top:123px;font-size:7px;line-height:9px;color:#222;-webkit-text-stroke:0.2px #222">3#楼、4#楼形象进度</div>
    <div class="t" style="left:11px;top:146px;font-size:6px;line-height:8px;color:#333;font-family:'Liberation Mono',monospace">3# 2014-08-22</div>
  </div>
  <!-- dialog -->
  <div class="a" style="left:348px;top:471px;width:257px;height:167px;background:#f0f3f6;border:1px solid #8a98a8;border-radius:5px"></div>
  <div class="a" style="left:349px;top:472px;width:255px;height:15px;border-radius:4px 4px 0 0;background:linear-gradient(90deg,#dfe6ee 0%,#c8d2dc 25%,#3c4044 36%,#2a2e32 55%,#6a7a88 68%,#b8c8d6 85%,#d8e2ea 100%)"></div>
  <div class="a" style="left:352px;top:476px;width:7px;height:7px;background:#4a90d0;border-radius:1px"></div>
  <div class="t" style="left:362px;top:475px;font-size:8px;color:#222">附件列表</div>
  <div class="a" style="left:352px;top:487px;width:245px;height:144px;background:#fff;border:1px solid #d0d4d8"></div>
  <div class="a" style="left:366px;top:492px;width:40px;height:10px;background:linear-gradient(#c8e8fa,#8ccaf0)"></div>
  <div class="t" style="left:376px;top:492px;font-size:7.5px;line-height:10px;color:#111;font-weight:bold">文件名</div>
  <div class="t" style="left:412px;top:492px;font-size:7px;line-height:10px;color:#333">文件大小(KB)</div>
  <div class="t" style="left:465px;top:492px;font-size:7px;line-height:10px;color:#333">上传时间</div>
  <div class="t" style="left:504px;top:492px;font-size:7px;line-height:10px;color:#333">文件来源</div>
  <div class="a" style="left:358px;top:502px;width:179px;height:1px;background:#e8e8e8"></div>
  <div class="a" style="left:358px;top:503px;width:8px;height:9px;background:#f5c860"></div>
  <div class="t" style="left:360px;top:503px;font-size:6.5px;line-height:9px;color:#333">1</div>
  <div class="t" style="left:368px;top:503px;font-size:6px;line-height:9px;color:#333">08el-3qu...</div>
  <div class="t" style="left:440px;top:503px;font-size:6px;line-height:9px;color:#333">4000</div>
  <div class="t" style="left:457px;top:503px;font-size:6px;line-height:9px;color:#333">2014-08-18</div>
  <div class="t" style="left:499px;top:503px;font-size:7px;line-height:9px;color:#333">本地</div>
  <div class="a" style="left:358px;top:512px;width:179px;height:1px;background:#e8e8e8"></div>
  <div class="a" style="left:406px;top:492px;width:1px;height:20px;background:#e4e4e4"></div>
  <div class="a" style="left:455px;top:492px;width:1px;height:20px;background:#e4e4e4"></div>
  <div class="a" style="left:497px;top:492px;width:1px;height:20px;background:#e4e4e4"></div>
  <div class="a" style="left:536px;top:492px;width:1px;height:20px;background:#e4e4e4"></div>
  <!-- CAD window -->
  <div class="a" style="left:582px;top:265px;width:384px;height:305px;background:linear-gradient(#f2f6fa,#dce6ee 10%,#d0dae4);border:1px solid #a8b4c0;border-radius:5px"></div>
  <div class="a" style="left:606px;top:267px;width:86px;height:13px;background:linear-gradient(#5a5a5a,#2a2a2a);border-radius:2px"></div>
  <div class="t" style="left:610px;top:267px;font-size:8px;color:#eee;letter-spacing:2px">▭ ▱ ▯ ↶ ⁃ ⎙▾</div>
  <div class="t" style="left:712px;top:269px;font-size:7.5px;color:#222">AutoCAD 2010</div>
  <div class="t" style="left:766px;top:269px;font-size:6.8px;color:#222">08el-3qu图审核.dwg</div>
  <div class="a" style="left:833px;top:267px;width:75px;height:13px;background:linear-gradient(#5a5a5a,#2a2a2a);border-radius:2px"></div>
  <div class="t" style="left:836px;top:267px;font-size:8px;color:#eee;letter-spacing:3px">▸⩧ ⚒ ≗ ★</div>
  <div class="a" style="left:892px;top:268px;width:10px;height:10px;border-radius:50%;background:#eee;color:#333;font-size:8px;line-height:10px;text-align:center;font-weight:bold">?</div>
  <div class="a" style="left:916px;top:267px;width:48px;height:10px;background:linear-gradient(#f4f4f4,#dcdcdc);border:1px solid #bbb;border-radius:2px"></div>
  <div class="a" style="left:922px;top:273px;width:6px;height:1px;background:#777"></div>
  <div class="a" style="left:936px;top:269px;width:6px;height:5px;border:1px solid #777"></div>
  <div class="t" style="left:951px;top:266px;font-size:8px;color:#777">✕</div>
  <div class="a" style="left:586px;top:280px;width:378px;height:10px;background:#2c2c2c"></div>
  <div class="a" style="left:586px;top:268px;width:19px;height:21px;background:linear-gradient(#e8e8e8,#a8a8a8);border:1px solid #777;border-radius:2px"></div>
  <svg class="a" style="left:586px;top:268px" width="20" height="22"><polygon points="3,18 10,3 17,18 10,14" fill="#e01a1a"/><polygon points="10,3 17,18 10,14" fill="#a80000"/></svg>
  <div class="a" style="left:609px;top:282px;width:21px;height:9px;background:#f4f4f4"></div>
  <div class="t" style="left:612px;top:282px;font-size:7px;color:#222">常用</div>
  <div class="t" style="left:636px;top:282px;font-size:7px;color:#eee;word-spacing:7px">插入 注释 参数化 视图 管理 输出</div>
  <div class="a" style="left:785px;top:284px;width:7px;height:4px;background:#ddd"></div>
  <div class="a" style="left:586px;top:291px;width:378px;height:48px;background:linear-gradient(#fbfbfb,#ececec)"></div>
  <div class="a" style="left:903px;top:291px;width:61px;height:48px;background:linear-gradient(#e8e8e8,#b8b8b8)"></div>

  <div class="a" style="left:641px;top:292px;width:1px;height:47px;background:#d8d8d8"></div>
  <div class="a" style="left:720px;top:292px;width:1px;height:47px;background:#d8d8d8"></div>
  <div class="a" style="left:751px;top:292px;width:1px;height:47px;background:#d8d8d8"></div>
  <div class="a" style="left:781px;top:292px;width:1px;height:47px;background:#d8d8d8"></div>
  <div class="a" style="left:811px;top:292px;width:1px;height:47px;background:#d8d8d8"></div>
  <div class="a" style="left:841px;top:292px;width:1px;height:47px;background:#d8d8d8"></div>
  <div class="a" style="left:871px;top:292px;width:1px;height:47px;background:#d8d8d8"></div>
  <div class="a" style="left:903px;top:292px;width:1px;height:47px;background:#d8d8d8"></div>
  <div class="a" style="left:586px;top:330px;width:317px;height:1px;background:#e2e2e2"></div>
  <svg class="a" style="left:0;top:0" width="1024" height="768">
   <line x1="593" y1="311" x2="606" y2="297" stroke="#555" stroke-width="1.6"/>
   <text x="593" y="321" font-size="7" fill="#333">直线</text>
   <g fill="none" stroke="#666" stroke-width="1">
    <path d="M612,303 V298 H619"/><circle cx="615" cy="310" r="3"/><path d="M612,321 Q615,316 619,321 Z"/>
    <path d="M629,297 H636 V302 H629"/><rect x="629" y="308" width="7" height="5"/><rect x="629" y="317" width="7" height="6"/>
   </g>
   <text x="621" y="302" font-size="5" fill="#444">▾</text><text x="621" y="313" font-size="5" fill="#444">▾</text><text x="621" y="323" font-size="5" fill="#444">▾</text>
   <text x="606" y="337" font-size="7" fill="#333">绘图 ▾</text>
   <g stroke="#333" stroke-width="1.2"><line x1="656" y1="297" x2="656" y2="313"/><line x1="648" y1="305" x2="664" y2="305"/></g>
   <text x="649" y="318" font-size="7" fill="#333">移动</text>
   <g fill="none" stroke="#3a7ac0" stroke-width="1">
    <circle cx="673" cy="299" r="3"/><circle cx="685" cy="300" r="3.5"/><path d="M692,304 L696,296 L700,304 Z"/><rect x="705" y="297" width="6" height="6"/>
    <rect x="670" y="308" width="8" height="6"/><path d="M683,314 L686,307 L689,314 Z"/><path d="M694,314 L697,307 L700,314 Z" stroke="#446"/><path d="M705,311 H712" stroke-dasharray="1,1"/>
    <rect x="683" y="317" width="8" height="6" stroke="#5aa0d8"/><rect x="695" y="317" width="6" height="6"/><path d="M705,323 V317 H711"/>
   </g>
   <line x1="671" y1="323" x2="677" y2="317" stroke="#c86020" stroke-width="1.5"/>
   <text x="713" y="302" font-size="5" fill="#444">▾</text><text x="713" y="313" font-size="5" fill="#444">▾</text><text x="713" y="323" font-size="5" fill="#444">▾</text>
   <text x="670" y="337" font-size="7" fill="#333">修改 ▾</text>
   <rect x="728" y="296" width="12" height="7" fill="#e0e0e0" stroke="#666"/><rect x="735" y="301" width="6" height="9" fill="#fff" stroke="#555"/>
   <text x="729" y="318" font-size="7" fill="#333">图层</text>
   <text x="758" y="310" font-size="15" fill="#222" font-family="Liberation Sans">A</text>
   <text x="759" y="318" font-size="7" fill="#333">注释</text>
   <rect x="788" y="297" width="10" height="7" fill="#eee" stroke="#666"/><circle cx="797" cy="305" r="3.5" fill="#eee" stroke="#666"/>
   <text x="792" y="318" font-size="7" fill="#333">块</text>
   <text x="820" y="318" font-size="7" fill="#333">特性</text>
   <rect x="848" y="300" width="18" height="6" fill="#f0d040" stroke="#8a7a30"/>
   <text x="843" y="318" font-size="6.5" fill="#333">实用工具</text>
   <rect x="881" y="296" width="8" height="11" fill="#ddd" stroke="#777"/><rect x="885" y="299" width="8" height="10" fill="#fff" stroke="#777"/>
   <text x="877" y="318" font-size="7" fill="#333">剪贴板</text>
   <g font-size="5" fill="#444"><text x="734" y="337">▾</text><text x="764" y="337">▾</text><text x="794" y="337">▾</text><text x="824" y="337">▾</text><text x="854" y="337">▾</text><text x="885" y="337">▾</text></g>
  </svg>
  <div class="a" style="left:818px;top:295px;width:16px;height:16px;border-radius:50%;background:conic-gradient(#e83030,#f0c020,#40b040,#30a0d0,#3050c0,#a040c0,#e83030)"></div>
  <div class="a" style="left:586px;top:339px;width:378px;height:2px;background:#8a8a8a"></div>
  <!-- drawing -->
  <div class="a" style="left:586px;top:341px;width:372px;height:175px;background:#000"></div>
  <div class="a" style="left:957px;top:341px;width:7px;height:175px;background:#fafafa;border-left:1px solid #ccc"></div>

<svg class="a" style="left:0;top:0" width="1024" height="768">
<line x1="601.5" y1="341" x2="601.5" y2="516" stroke="#707070" stroke-width="1"/>
<line x1="639.5" y1="341" x2="639.5" y2="516" stroke="#707070" stroke-width="1"/>
<line x1="690.5" y1="341" x2="690.5" y2="516" stroke="#707070" stroke-width="1"/>
<line x1="727.5" y1="341" x2="727.5" y2="516" stroke="#707070" stroke-width="1"/>
<line x1="764.5" y1="341" x2="764.5" y2="516" stroke="#707070" stroke-width="1"/>
<line x1="801.5" y1="341" x2="801.5" y2="516" stroke="#707070" stroke-width="1"/>
<line x1="839.5" y1="341" x2="839.5" y2="516" stroke="#707070" stroke-width="1"/>
<line x1="853.5" y1="341" x2="853.5" y2="516" stroke="#707070" stroke-width="1"/>
<line x1="609.5" y1="341" x2="609.5" y2="516" stroke="#d8d8d8" stroke-width="1"/>
<line x1="654.5" y1="341" x2="654.5" y2="516" stroke="#d8d8d8" stroke-width="1"/>
<line x1="612" y1="354.5" x2="880" y2="354.5" stroke="#646464" stroke-width="1"/>
<line x1="612" y1="368.5" x2="880" y2="368.5" stroke="#646464" stroke-width="1"/>
<line x1="612" y1="405.5" x2="880" y2="405.5" stroke="#646464" stroke-width="1"/>
<line x1="612" y1="442.5" x2="880" y2="442.5" stroke="#646464" stroke-width="1"/>
<line x1="612" y1="479.5" x2="880" y2="479.5" stroke="#646464" stroke-width="1"/>
<line x1="612" y1="493.5" x2="880" y2="493.5" stroke="#646464" stroke-width="1"/>
<rect x="624.5" y="353.5" width="246" height="141" fill="none" stroke="#28a028" stroke-width="1"/>
<line x1="639" y1="508.5" x2="853" y2="508.5" stroke="#30c030"/><line x1="639" y1="515.5" x2="853" y2="515.5" stroke="#30c030"/>
<line x1="639.5" y1="494" x2="639.5" y2="516" stroke="#30c030"/><line x1="853.5" y1="494" x2="853.5" y2="516" stroke="#30c030"/>
<rect x="651.0" y="352.0" width="7" height="6" fill="#989e88" stroke="#28a028" stroke-width="0.8"/><rect x="652" y="358" width="6" height="2" fill="#eee"/>
<rect x="651.0" y="491.0" width="7" height="6" fill="#989e88" stroke="#28a028" stroke-width="0.8"/><rect x="652" y="497" width="6" height="2" fill="#eee"/>
<rect x="687.0" y="352.0" width="7" height="6" fill="#989e88" stroke="#28a028" stroke-width="0.8"/><rect x="688" y="358" width="6" height="2" fill="#eee"/>
<rect x="687.0" y="491.0" width="7" height="6" fill="#989e88" stroke="#28a028" stroke-width="0.8"/><rect x="688" y="497" width="6" height="2" fill="#eee"/>
<rect x="724.0" y="352.0" width="7" height="6" fill="#989e88" stroke="#28a028" stroke-width="0.8"/><rect x="725" y="358" width="6" height="2" fill="#eee"/>
<rect x="724.0" y="491.0" width="7" height="6" fill="#989e88" stroke="#28a028" stroke-width="0.8"/><rect x="725" y="497" width="6" height="2" fill="#eee"/>
<rect x="761.0" y="352.0" width="7" height="6" fill="#989e88" stroke="#28a028" stroke-width="0.8"/><rect x="762" y="358" width="6" height="2" fill="#eee"/>
<rect x="761.0" y="491.0" width="7" height="6" fill="#989e88" stroke="#28a028" stroke-width="0.8"/><rect x="762" y="497" width="6" height="2" fill="#eee"/>
<rect x="798.0" y="352.0" width="7" height="6" fill="#989e88" stroke="#28a028" stroke-width="0.8"/><rect x="799" y="358" width="6" height="2" fill="#eee"/>
<rect x="798.0" y="491.0" width="7" height="6" fill="#989e88" stroke="#28a028" stroke-width="0.8"/><rect x="799" y="497" width="6" height="2" fill="#eee"/>
<rect x="836.0" y="352.0" width="7" height="6" fill="#989e88" stroke="#28a028" stroke-width="0.8"/><rect x="837" y="358" width="6" height="2" fill="#eee"/>
<rect x="836.0" y="491.0" width="7" height="6" fill="#989e88" stroke="#28a028" stroke-width="0.8"/><rect x="837" y="497" width="6" height="2" fill="#eee"/>
<rect x="636.0" y="366.0" width="7" height="6" fill="#989e88" stroke="#28a028" stroke-width="0.8"/><rect x="637" y="372" width="6" height="2" fill="#eee"/>
<rect x="850.0" y="366.0" width="7" height="6" fill="#989e88" stroke="#28a028" stroke-width="0.8"/><rect x="851" y="372" width="6" height="2" fill="#eee"/>
<rect x="636.0" y="403.0" width="7" height="6" fill="#989e88" stroke="#28a028" stroke-width="0.8"/><rect x="637" y="409" width="6" height="2" fill="#eee"/>
<rect x="850.0" y="403.0" width="7" height="6" fill="#989e88" stroke="#28a028" stroke-width="0.8"/><rect x="851" y="409" width="6" height="2" fill="#eee"/>
<rect x="636.0" y="440.0" width="7" height="6" fill="#989e88" stroke="#28a028" stroke-width="0.8"/><rect x="637" y="446" width="6" height="2" fill="#eee"/>
<rect x="850.0" y="440.0" width="7" height="6" fill="#989e88" stroke="#28a028" stroke-width="0.8"/><rect x="851" y="446" width="6" height="2" fill="#eee"/>
<rect x="636.0" y="477.0" width="7" height="6" fill="#989e88" stroke="#28a028" stroke-width="0.8"/><rect x="637" y="483" width="6" height="2" fill="#eee"/>
<rect x="850.0" y="477.0" width="7" height="6" fill="#989e88" stroke="#28a028" stroke-width="0.8"/><rect x="851" y="483" width="6" height="2" fill="#eee"/>
<circle cx="617" cy="354" r="2.5" fill="none" stroke="#5050d0"/><circle cx="875" cy="354" r="2.5" fill="none" stroke="#5050d0"/>
<circle cx="617" cy="368" r="2.5" fill="none" stroke="#5050d0"/><circle cx="875" cy="368" r="2.5" fill="none" stroke="#5050d0"/>
<circle cx="617" cy="405" r="2.5" fill="none" stroke="#5050d0"/><circle cx="875" cy="405" r="2.5" fill="none" stroke="#5050d0"/>
<circle cx="617" cy="442" r="2.5" fill="none" stroke="#5050d0"/><circle cx="875" cy="442" r="2.5" fill="none" stroke="#5050d0"/>
<circle cx="617" cy="479" r="2.5" fill="none" stroke="#5050d0"/><circle cx="875" cy="479" r="2.5" fill="none" stroke="#5050d0"/>
<circle cx="617" cy="493" r="2.5" fill="none" stroke="#5050d0"/><circle cx="875" cy="493" r="2.5" fill="none" stroke="#5050d0"/>
<rect x="679.5" y="393.5" width="133" height="60" fill="none" stroke="#30c030" stroke-dasharray="2,1.5"/>
<rect x="683" y="396" width="24" height="54" fill="none" stroke="#78c8c8" stroke-width="1.6"/>
<rect x="686" y="399" width="18" height="48" fill="none" stroke="#38d038" stroke-width="1"/>
<line x1="683" y1="423" x2="693" y2="423" stroke="#e0e0e0" stroke-width="1.5"/>
<rect x="714" y="396" width="24" height="54" fill="none" stroke="#78c8c8" stroke-width="1.6"/>
<rect x="717" y="399" width="18" height="48" fill="none" stroke="#38d038" stroke-width="1"/>
<line x1="714" y1="423" x2="724" y2="423" stroke="#e0e0e0" stroke-width="1.5"/>
<rect x="745" y="396" width="27" height="54" fill="none" stroke="#78c8c8" stroke-width="1.6"/>
<rect x="748" y="399" width="21" height="48" fill="none" stroke="#38d038" stroke-width="1"/>
<line x1="745" y1="423" x2="755" y2="423" stroke="#e0e0e0" stroke-width="1.5"/>
<rect x="779" y="396" width="31" height="54" fill="none" stroke="#78c8c8" stroke-width="1.6"/>
<rect x="782" y="399" width="25" height="48" fill="none" stroke="#38d038" stroke-width="1"/>
<line x1="779" y1="423" x2="789" y2="423" stroke="#e0e0e0" stroke-width="1.5"/>
<rect x="762" y="395" width="6" height="1" fill="#e040e0"/>
<rect x="773" y="452" width="2" height="1" fill="#40e040"/>
<rect x="791" y="397" width="5" height="1" fill="#ffffff"/>
<rect x="711" y="434" width="6" height="3" fill="#40e0e0"/>
<rect x="781" y="396" width="4" height="2" fill="#ffffff"/>
<rect x="716" y="446" width="7" height="1" fill="#ffffff"/>
<rect x="706" y="398" width="2" height="3" fill="#5050ff"/>
<rect x="696" y="398" width="7" height="3" fill="#40e0e0"/>
<rect x="789" y="423" width="4" height="2" fill="#40e0e0"/>
<rect x="743" y="400" width="6" height="2" fill="#e040e0"/>
<rect x="806" y="451" width="2" height="3" fill="#e040e0"/>
<rect x="787" y="395" width="5" height="1" fill="#40e0e0"/>
<rect x="699" y="450" width="7" height="2" fill="#5050ff"/>
<rect x="807" y="398" width="4" height="2" fill="#e040e0"/>
<rect x="696" y="451" width="4" height="3" fill="#40e0e0"/>
<rect x="778" y="448" width="3" height="3" fill="#5050ff"/>
<rect x="709" y="446" width="7" height="1" fill="#ffffff"/>
<rect x="781" y="397" width="5" height="2" fill="#ffffff"/>
<rect x="751" y="421" width="7" height="2" fill="#e0e040"/>
<rect x="771" y="399" width="3" height="1" fill="#e040e0"/>
<rect x="739" y="447" width="4" height="2" fill="#ffffff"/>
<rect x="681" y="449" width="3" height="3" fill="#5050ff"/>
<rect x="693" y="443" width="5" height="2" fill="#ffffff"/>
<rect x="782" y="424" width="2" height="1" fill="#d0d0d0"/>
<rect x="697" y="395" width="6" height="1" fill="#5050ff"/>
<rect x="706" y="403" width="4" height="3" fill="#e040e0"/>
<rect x="686" y="407" width="3" height="3" fill="#d0d0d0"/>
<rect x="744" y="450" width="2" height="2" fill="#e040e0"/>
<rect x="799" y="397" width="2" height="3" fill="#ffffff"/>
<rect x="767" y="424" width="6" height="1" fill="#ffffff"/>
<rect x="732" y="403" width="2" height="3" fill="#ffffff"/>
<rect x="756" y="399" width="6" height="2" fill="#e0e040"/>
<rect x="722" y="408" width="6" height="2" fill="#ffffff"/>
<rect x="737" y="398" width="5" height="3" fill="#40e040"/>
<rect x="738" y="450" width="2" height="2" fill="#40e0e0"/>
<rect x="800" y="438" width="5" height="3" fill="#5050ff"/>
<rect x="769" y="396" width="5" height="1" fill="#40e040"/>
<rect x="766" y="433" width="5" height="3" fill="#40e0e0"/>
<rect x="768" y="399" width="5" height="3" fill="#e040e0"/>
<rect x="731" y="421" width="2" height="3" fill="#5050ff"/>
<rect x="781" y="397" width="3" height="1" fill="#ffffff"/>
<rect x="687" y="450" width="6" height="3" fill="#ffffff"/>
<rect x="801" y="403" width="3" height="1" fill="#ffffff"/>
<rect x="683" y="400" width="7" height="1" fill="#ffffff"/>
<rect x="791" y="400" width="4" height="1" fill="#40e0e0"/>
<rect x="754" y="442" width="4" height="3" fill="#5050ff"/>
<rect x="787" y="397" width="5" height="3" fill="#5050ff"/>
<rect x="787" y="402" width="6" height="3" fill="#ffffff"/>
<rect x="684" y="400" width="3" height="1" fill="#40e0e0"/>
<rect x="716" y="397" width="2" height="2" fill="#ffffff"/>
<rect x="803" y="400" width="3" height="1" fill="#40e0e0"/>
<rect x="750" y="400" width="6" height="1" fill="#40e0e0"/>
<rect x="696" y="433" width="3" height="3" fill="#ffffff"/>
<rect x="750" y="450" width="3" height="3" fill="#ffffff"/>
<rect x="746" y="447" width="5" height="1" fill="#ffffff"/>
<rect x="780" y="398" width="5" height="1" fill="#40e040"/>
<rect x="734" y="399" width="7" height="3" fill="#ffffff"/>
<rect x="773" y="395" width="3" height="3" fill="#40e0e0"/>
<rect x="704" y="404" width="3" height="3" fill="#40e040"/>
<rect x="790" y="449" width="4" height="2" fill="#40e040"/>
<rect x="703" y="448" width="5" height="2" fill="#ffffff"/>
<rect x="684" y="427" width="6" height="1" fill="#e0e040"/>
<rect x="708" y="400" width="4" height="2" fill="#e040e0"/>
<rect x="690" y="400" width="7" height="2" fill="#d0d0d0"/>
<rect x="783" y="452" width="7" height="2" fill="#40e0e0"/>
<rect x="702" y="445" width="5" height="1" fill="#ffffff"/>
<rect x="748" y="451" width="6" height="1" fill="#e040e0"/>
<rect x="697" y="452" width="4" height="3" fill="#40e0e0"/>
<rect x="786" y="396" width="7" height="1" fill="#ffffff"/>
<rect x="708" y="395" width="4" height="3" fill="#40e040"/>
<rect x="758" y="452" width="6" height="3" fill="#40e0e0"/>
<rect x="725" y="396" width="2" height="1" fill="#e0e040"/>
<rect x="684" y="399" width="5" height="1" fill="#ffffff"/>
<rect x="794" y="446" width="7" height="2" fill="#d0d0d0"/>
<rect x="780" y="398" width="4" height="1" fill="#40e040"/>
<rect x="715" y="397" width="2" height="3" fill="#40e0e0"/>
<rect x="745" y="397" width="6" height="3" fill="#d0d0d0"/>
<rect x="752" y="447" width="5" height="1" fill="#40e0e0"/>
<rect x="720" y="449" width="4" height="3" fill="#5050ff"/>
<rect x="762" y="446" width="4" height="1" fill="#40e040"/>
<rect x="680" y="449" width="6" height="3" fill="#e0e040"/>
<rect x="731" y="395" width="4" height="1" fill="#e040e0"/>
<rect x="716" y="450" width="4" height="2" fill="#40e0e0"/>
<rect x="739" y="394" width="4" height="3" fill="#d0d0d0"/>
<rect x="806" y="440" width="2" height="3" fill="#ffffff"/>
<rect x="789" y="445" width="6" height="3" fill="#ffffff"/>
<rect x="684" y="431" width="2" height="1" fill="#40e040"/>
<rect x="690" y="395" width="5" height="3" fill="#d0d0d0"/>
<rect x="692" y="434" width="5" height="2" fill="#40e040"/>
<rect x="680" y="398" width="6" height="1" fill="#ffffff"/>
<rect x="696" y="451" width="4" height="1" fill="#e040e0"/>
<rect x="732" y="451" width="5" height="1" fill="#40e0e0"/>
<rect x="802" y="399" width="2" height="3" fill="#40e040"/>
<rect x="717" y="435" width="6" height="3" fill="#e0e040"/>
<rect x="714" y="449" width="7" height="1" fill="#e0e040"/>
<rect x="735" y="412" width="4" height="2" fill="#ffffff"/>
<rect x="799" y="401" width="4" height="1" fill="#40e040"/>
<rect x="801" y="394" width="5" height="2" fill="#ffffff"/>
<rect x="779" y="398" width="3" height="3" fill="#e040e0"/>
<rect x="747" y="432" width="4" height="1" fill="#ffffff"/>
<rect x="773" y="449" width="2" height="1" fill="#d0d0d0"/>
<rect x="680" y="451" width="7" height="1" fill="#e0e040"/>
<rect x="786" y="396" width="2" height="2" fill="#5050ff"/>
<rect x="766" y="400" width="7" height="2" fill="#40e0e0"/>
<rect x="744" y="446" width="4" height="2" fill="#e040e0"/>
<rect x="750" y="400" width="7" height="2" fill="#40e0e0"/>
<rect x="718" y="421" width="3" height="2" fill="#5050ff"/>
<rect x="789" y="442" width="6" height="3" fill="#d0d0d0"/>
<rect x="732" y="397" width="5" height="3" fill="#d0d0d0"/>
<rect x="715" y="452" width="6" height="1" fill="#40e0e0"/>
<rect x="723" y="449" width="4" height="3" fill="#e0e040"/>
<rect x="746" y="451" width="6" height="3" fill="#40e0e0"/>
<rect x="780" y="394" width="3" height="3" fill="#e040e0"/>
<rect x="807" y="447" width="5" height="1" fill="#40e0e0"/>
<rect x="729" y="446" width="2" height="2" fill="#ffffff"/>
<rect x="741" y="445" width="2" height="3" fill="#40e040"/>
<rect x="785" y="441" width="5" height="2" fill="#40e040"/>
<rect x="766" y="446" width="3" height="3" fill="#5050ff"/>
<rect x="808" y="398" width="4" height="1" fill="#e040e0"/>
<rect x="778" y="451" width="2" height="1" fill="#e0e040"/>
<rect x="688" y="451" width="2" height="1" fill="#40e0e0"/>
<rect x="780" y="450" width="3" height="1" fill="#40e0e0"/>
<rect x="737" y="427" width="7" height="3" fill="#e040e0"/>
<rect x="797" y="394" width="3" height="1" fill="#40e0e0"/>
<rect x="689" y="399" width="6" height="3" fill="#e0e040"/>
<rect x="791" y="399" width="4" height="3" fill="#e040e0"/>
<rect x="729" y="408" width="2" height="3" fill="#40e0e0"/>
<rect x="757" y="414" width="5" height="3" fill="#40e040"/>
<rect x="740" y="447" width="2" height="1" fill="#e0e040"/>
<rect x="729" y="451" width="4" height="1" fill="#e040e0"/>
<rect x="788" y="396" width="7" height="2" fill="#5050ff"/>
<rect x="772" y="399" width="7" height="3" fill="#e0e040"/>
<rect x="697" y="449" width="3" height="2" fill="#40e040"/>
<rect x="736" y="452" width="6" height="2" fill="#e040e0"/>
<rect x="727" y="420" width="6" height="1" fill="#40e0e0"/>
<rect x="780" y="395" width="5" height="1" fill="#ffffff"/>
<rect x="695" y="422" width="7" height="1" fill="#5050ff"/>
<rect x="700" y="395" width="7" height="2" fill="#ffffff"/>
<rect x="688" y="451" width="4" height="2" fill="#5050ff"/>
<rect x="723" y="446" width="4" height="2" fill="#e040e0"/>
<line x1="592" y1="512" x2="592" y2="488" stroke="#ddd"/><line x1="592" y1="512" x2="612" y2="512" stroke="#ddd"/><rect x="589" y="509" width="6" height="6" fill="none" stroke="#ddd"/>
<line x1="586" y1="426" x2="622" y2="426" stroke="#bbb"/><line x1="595" y1="402" x2="595" y2="450" stroke="#888"/>
<rect x="626" y="361" width="2" height="3" fill="#fff"/><rect x="866" y="361" width="2" height="3" fill="#fff"/>
<rect x="626" y="387" width="2" height="3" fill="#fff"/><rect x="866" y="387" width="2" height="3" fill="#fff"/>
<rect x="626" y="420" width="2" height="3" fill="#fff"/><rect x="866" y="420" width="2" height="3" fill="#fff"/>
<rect x="626" y="458" width="2" height="3" fill="#fff"/><rect x="866" y="458" width="2" height="3" fill="#fff"/>
<rect x="626" y="485" width="2" height="3" fill="#fff"/><rect x="866" y="485" width="2" height="3" fill="#fff"/>
<rect x="880" y="464" width="31" height="52" fill="#f0b020"/><rect x="886" y="464" width="14" height="52" fill="#e020d0"/><rect x="900" y="466" width="5" height="50" fill="#d03010"/>
<line x1="880" y1="466.5" x2="911" y2="466.5" stroke="#ffe080" stroke-width="0.5" opacity="0.6"/>
<line x1="880" y1="469.5" x2="911" y2="469.5" stroke="#ffe080" stroke-width="0.5" opacity="0.6"/>
<line x1="880" y1="472.5" x2="911" y2="472.5" stroke="#ffe080" stroke-width="0.5" opacity="0.6"/>
<line x1="880" y1="475.5" x2="911" y2="475.5" stroke="#ffe080" stroke-width="0.5" opacity="0.6"/>
<line x1="880" y1="478.5" x2="911" y2="478.5" stroke="#ffe080" stroke-width="0.5" opacity="0.6"/>
<line x1="880" y1="481.5" x2="911" y2="481.5" stroke="#ffe080" stroke-width="0.5" opacity="0.6"/>
<line x1="880" y1="484.5" x2="911" y2="484.5" stroke="#ffe080" stroke-width="0.5" opacity="0.6"/>
<line x1="880" y1="487.5" x2="911" y2="487.5" stroke="#ffe080" stroke-width="0.5" opacity="0.6"/>
<line x1="880" y1="490.5" x2="911" y2="490.5" stroke="#ffe080" stroke-width="0.5" opacity="0.6"/>
<line x1="880" y1="493.5" x2="911" y2="493.5" stroke="#ffe080" stroke-width="0.5" opacity="0.6"/>
<line x1="880" y1="496.5" x2="911" y2="496.5" stroke="#ffe080" stroke-width="0.5" opacity="0.6"/>
<line x1="880" y1="499.5" x2="911" y2="499.5" stroke="#ffe080" stroke-width="0.5" opacity="0.6"/>
<line x1="880" y1="502.5" x2="911" y2="502.5" stroke="#ffe080" stroke-width="0.5" opacity="0.6"/>
<line x1="880" y1="505.5" x2="911" y2="505.5" stroke="#ffe080" stroke-width="0.5" opacity="0.6"/>
<line x1="880" y1="508.5" x2="911" y2="508.5" stroke="#ffe080" stroke-width="0.5" opacity="0.6"/>
<line x1="880" y1="511.5" x2="911" y2="511.5" stroke="#ffe080" stroke-width="0.5" opacity="0.6"/>
<line x1="880" y1="514.5" x2="911" y2="514.5" stroke="#ffe080" stroke-width="0.5" opacity="0.6"/>
<line x1="914.5" y1="343" x2="914.5" y2="516" stroke="#eee"/><line x1="943.5" y1="343" x2="943.5" y2="516" stroke="#eee"/><line x1="946.5" y1="343" x2="946.5" y2="516" stroke="#ccc"/>
<line x1="915" y1="378.5" x2="942" y2="378.5" stroke="#eee" stroke-width="1.2"/>
<line x1="915" y1="383.5" x2="942" y2="383.5" stroke="#eee" stroke-width="1.2"/>
<line x1="915" y1="387.5" x2="942" y2="387.5" stroke="#eee" stroke-width="1.2"/>
<line x1="915" y1="391.5" x2="942" y2="391.5" stroke="#eee" stroke-width="1.2"/>
<line x1="915" y1="395.5" x2="942" y2="395.5" stroke="#eee" stroke-width="1.2"/>
<line x1="915" y1="399.5" x2="942" y2="399.5" stroke="#eee" stroke-width="1.2"/>
<line x1="915" y1="403.5" x2="942" y2="403.5" stroke="#eee" stroke-width="1.2"/>
<line x1="915" y1="407.5" x2="942" y2="407.5" stroke="#eee" stroke-width="1.2"/>
<line x1="915" y1="411.5" x2="942" y2="411.5" stroke="#eee" stroke-width="1.2"/>
<line x1="915" y1="380.5" x2="943" y2="380.5" stroke="#ddd"/>
<line x1="915" y1="453.5" x2="943" y2="453.5" stroke="#ddd"/>
<line x1="915" y1="455.5" x2="943" y2="455.5" stroke="#ddd"/>
<line x1="915" y1="478.5" x2="943" y2="478.5" stroke="#ddd"/>
<line x1="915" y1="485.5" x2="943" y2="485.5" stroke="#ddd"/>
<line x1="915" y1="490.5" x2="943" y2="490.5" stroke="#ddd"/>
<line x1="915" y1="495.5" x2="943" y2="495.5" stroke="#ddd"/>
<line x1="915" y1="500.5" x2="943" y2="500.5" stroke="#ddd"/>
<line x1="915" y1="505.5" x2="943" y2="505.5" stroke="#ddd"/>
<line x1="915" y1="510.5" x2="943" y2="510.5" stroke="#ddd"/>
<rect x="918" y="345" width="10" height="28" fill="none" stroke="#ddd"/><rect x="930" y="350" width="3" height="20" fill="#ccc"/>
<rect x="926" y="491" width="8" height="20" fill="#8a1010"/>
<text x="948" y="354" font-size="7" fill="#ddd">x</text>
</svg>

  <div class="a" style="left:586px;top:516px;width:378px;height:8px;background:#f4f4f4;border-bottom:1px solid #ccc"></div>
  <div class="t" style="left:589px;top:515px;font-size:7px;color:#888;letter-spacing:1px">|◂ ◂ ▸ ▸|</div>
  <div class="a" style="left:620px;top:516px;width:22px;height:8px;background:#111;border-radius:0 0 6px 6px"></div>
  <div class="t" style="left:622px;top:515px;font-size:7px;color:#eee">模型</div>
  <div class="t" style="left:642px;top:515px;font-size:7px;color:#333">/ 布局1 /</div>
  <div class="a" style="left:756px;top:517px;width:10px;height:6px;background:#ddd;border:1px solid #aaa"></div>
  <div class="a" style="left:586px;top:524px;width:378px;height:31px;background:#fff"></div>
  <div class="a" style="left:586px;top:524px;width:7px;height:31px;background:#c8c8c8"></div>
  <div class="a" style="left:593px;top:545px;width:364px;height:1px;background:#ccc"></div>
  <div class="t" style="left:595px;top:526px;font-size:7.5px;color:#333;font-family:'Liberation Mono',monospace">命令: COMMANDLINE</div>
  <div class="t" style="left:595px;top:534px;font-size:7.5px;color:#333;font-family:'Liberation Mono',monospace">命令: DRAWINGRECOVERY</div>
  <div class="t" style="left:595px;top:548px;font-size:7.5px;color:#333">命令:</div>
  <div class="a" style="left:946px;top:546px;width:11px;height:8px;background:#ddd"></div>
  <div class="a" style="left:586px;top:555px;width:378px;height:12px;background:linear-gradient(#b8b8b8,#9a9a9a)"></div>
  <div class="t" style="left:590px;top:557px;font-size:6px;color:#222;font-family:'Liberation Mono',monospace">158330.0905, 335881.8088, 0.0000</div>

<div class="a" style="left:715px;top:556px;width:10px;height:10px;background:linear-gradient(#f4f4f4,#c8c8c8);border:1px solid #8a8a8a"></div>
<div class="a" style="left:717px;top:559px;width:6px;height:5px;border-left:1px solid #3a6aa0;border-bottom:1px solid #3a6aa0"></div>
<div class="a" style="left:726px;top:556px;width:10px;height:10px;background:linear-gradient(#f4f4f4,#c8c8c8);border:1px solid #8a8a8a"></div>
<div class="a" style="left:728px;top:559px;width:6px;height:5px;border-left:1px solid #3a6aa0;border-bottom:1px solid #3a6aa0"></div>
<div class="a" style="left:737px;top:556px;width:10px;height:10px;background:linear-gradient(#f4f4f4,#c8c8c8);border:1px solid #8a8a8a"></div>
<div class="a" style="left:739px;top:559px;width:6px;height:5px;border-left:1px solid #3a6aa0;border-bottom:1px solid #3a6aa0"></div>
<div class="a" style="left:748px;top:556px;width:10px;height:10px;background:linear-gradient(#f4f4f4,#c8c8c8);border:1px solid #8a8a8a"></div>
<div class="a" style="left:750px;top:559px;width:6px;height:5px;border-left:1px solid #3a6aa0;border-bottom:1px solid #3a6aa0"></div>
<div class="a" style="left:759px;top:556px;width:10px;height:10px;background:linear-gradient(#f4f4f4,#c8c8c8);border:1px solid #8a8a8a"></div>
<div class="a" style="left:761px;top:559px;width:6px;height:5px;border-left:1px solid #3a6aa0;border-bottom:1px solid #3a6aa0"></div>
<div class="a" style="left:770px;top:556px;width:10px;height:10px;background:linear-gradient(#f4f4f4,#c8c8c8);border:1px solid #8a8a8a"></div>
<div class="a" style="left:772px;top:559px;width:6px;height:5px;border-left:1px solid #3a6aa0;border-bottom:1px solid #3a6aa0"></div>
<div class="a" style="left:781px;top:556px;width:10px;height:10px;background:linear-gradient(#f4f4f4,#c8c8c8);border:1px solid #8a8a8a"></div>
<div class="a" style="left:783px;top:559px;width:6px;height:5px;border-left:1px solid #3a6aa0;border-bottom:1px solid #3a6aa0"></div>
<div class="a" style="left:792px;top:556px;width:10px;height:10px;background:linear-gradient(#f4f4f4,#c8c8c8);border:1px solid #8a8a8a"></div>
<div class="a" style="left:794px;top:559px;width:6px;height:5px;border-left:1px solid #3a6aa0;border-bottom:1px solid #3a6aa0"></div>
<div class="a" style="left:803px;top:556px;width:10px;height:10px;background:linear-gradient(#f4f4f4,#c8c8c8);border:1px solid #8a8a8a"></div>
<div class="a" style="left:805px;top:559px;width:6px;height:5px;border-left:1px solid #3a6aa0;border-bottom:1px solid #3a6aa0"></div>
<div class="a" style="left:814px;top:556px;width:10px;height:10px;background:linear-gradient(#f4f4f4,#c8c8c8);border:1px solid #8a8a8a"></div>
<div class="a" style="left:816px;top:559px;width:6px;height:5px;border-left:1px solid #3a6aa0;border-bottom:1px solid #3a6aa0"></div>
<div class="a" style="left:825px;top:556px;width:10px;height:10px;background:linear-gradient(#f4f4f4,#c8c8c8);border:1px solid #8a8a8a"></div>
<div class="a" style="left:827px;top:559px;width:6px;height:5px;border-left:1px solid #3a6aa0;border-bottom:1px solid #3a6aa0"></div>
<div class="a" style="left:833px;top:556px;width:10px;height:10px;background:linear-gradient(#f4f4f4,#c8c8c8);border:1px solid #8a8a8a"></div>
<div class="a" style="left:835px;top:559px;width:5px;height:5px;background:#8a8a8a;border-radius:50%"></div>
<div class="a" style="left:844px;top:556px;width:10px;height:10px;background:linear-gradient(#f4f4f4,#c8c8c8);border:1px solid #8a8a8a"></div>
<div class="a" style="left:846px;top:559px;width:5px;height:5px;background:#8a8a8a;border-radius:50%"></div>
<div class="a" style="left:855px;top:556px;width:10px;height:10px;background:linear-gradient(#f4f4f4,#c8c8c8);border:1px solid #8a8a8a"></div>
<div class="a" style="left:857px;top:559px;width:5px;height:5px;background:#8a8a8a;border-radius:50%"></div>
<div class="a" style="left:870px;top:556px;width:10px;height:10px;background:linear-gradient(#f4f4f4,#c8c8c8);border:1px solid #8a8a8a"></div>
<div class="a" style="left:872px;top:559px;width:5px;height:5px;background:#8a8a8a;border-radius:50%"></div>
<div class="a" style="left:881px;top:556px;width:10px;height:10px;background:linear-gradient(#f4f4f4,#c8c8c8);border:1px solid #8a8a8a"></div>
<div class="a" style="left:883px;top:559px;width:5px;height:5px;background:#8a8a8a;border-radius:50%"></div>
<div class="a" style="left:892px;top:556px;width:10px;height:10px;background:linear-gradient(#f4f4f4,#c8c8c8);border:1px solid #8a8a8a"></div>
<div class="a" style="left:894px;top:559px;width:5px;height:5px;background:#8a8a8a;border-radius:50%"></div>
<div class="a" style="left:903px;top:556px;width:10px;height:10px;background:linear-gradient(#f4f4f4,#c8c8c8);border:1px solid #8a8a8a"></div>
<div class="a" style="left:905px;top:559px;width:5px;height:5px;background:#8a8a8a;border-radius:50%"></div>
<div class="a" style="left:914px;top:556px;width:10px;height:10px;background:linear-gradient(#f4f4f4,#c8c8c8);border:1px solid #8a8a8a"></div>
<div class="a" style="left:916px;top:559px;width:5px;height:5px;background:#8a8a8a;border-radius:50%"></div>
<div class="a" style="left:925px;top:556px;width:10px;height:10px;background:linear-gradient(#f4f4f4,#c8c8c8);border:1px solid #8a8a8a"></div>
<div class="a" style="left:927px;top:559px;width:5px;height:5px;background:#8a8a8a;border-radius:50%"></div>
<div class="a" style="left:936px;top:556px;width:10px;height:10px;background:linear-gradient(#f4f4f4,#c8c8c8);border:1px solid #8a8a8a"></div>
<div class="a" style="left:938px;top:559px;width:5px;height:5px;background:#8a8a8a;border-radius:50%"></div>
</div>
<!-- frame border -->
<div class="a" style="left:43px;top:212px;width:925px;height:523px;border:2px solid #6b90c2;border-radius:27px"></div>
</body></html>
